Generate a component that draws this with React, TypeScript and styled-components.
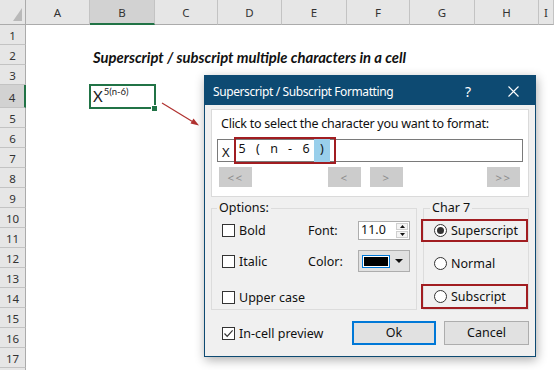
import React from 'react';
import styled, { createGlobalStyle, css } from 'styled-components';

const GlobalStyle = createGlobalStyle`
  html, body { margin: 0; padding: 0; background: #fff; }
  body { width: 554px; height: 370px; overflow: hidden; }
  * { box-sizing: border-box; }
`;

const UI_FONT = `"Noto Sans", "Open Sans", sans-serif`;
const CELL_FONT = `Lato, "Liberation Sans", sans-serif`;
const GREEN = '#217346';
const RED = '#a11d21';
const TITLE_BLUE = '#0d4a72';

const Stage = styled.div`
  position: relative;
  width: 554px;
  height: 370px;
  overflow: hidden;
  background: #fff;
`;

/* ---------------- Spreadsheet ---------------- */

const Sheet = styled.div`
  display: grid;
  grid-template-columns: 26px 64px 65px 63px 64px 65px 63px 65px 64px 1fr;
  grid-template-rows: 25px 20px 20px 20px 23px repeat(14, 20px);
  width: 554px;
  height: 370px;
  font-family: ${UI_FONT};
`;

const Corner = styled.div`
  grid-column: 1;
  grid-row: 1;
  background: #e6e6e6;
  border-right: 1px solid #ababab;
  border-bottom: 1px solid #ababab;
  display: flex;
  align-items: flex-end;
  justify-content: flex-end;
  padding: 0 3px 3px 0;
`;

const ColHeader = styled.div<{ $col: number; $selected?: boolean }>`
  grid-column: ${(p) => p.$col};
  grid-row: 1;
  background: ${(p) => (p.$selected ? '#d2d2d2' : '#e6e6e6')};
  border-right: 1px solid #c3c3c3;
  border-bottom: ${(p) => (p.$selected ? `2px solid ${GREEN}` : '1px solid #ababab')};
  display: flex;
  align-items: center;
  justify-content: center;
  font-size: 11.5px;
  color: #333;
  padding-top: ${(p) => (p.$selected ? '1px' : '0')};
`;

const RowHeader = styled.div<{ $row: number; $selected?: boolean }>`
  grid-column: 1;
  grid-row: ${(p) => p.$row};
  background: ${(p) => (p.$selected ? '#d2d2d2' : '#e6e6e6')};
  border-right: ${(p) => (p.$selected ? `2px solid ${GREEN}` : '1px solid #ababab')};
  border-bottom: 1px solid #c3c3c3;
  display: flex;
  align-items: center;
  justify-content: center;
  font-size: 11.5px;
  color: #333;
  padding-top: ${(p) => (p.$selected ? '3px' : '1px')};
`;

const Cell = styled.div<{ $col: number; $row: number; $active?: boolean }>`
  grid-column: ${(p) => p.$col};
  grid-row: ${(p) => p.$row};
  position: relative;
  display: flex;
  align-items: flex-end;
  padding: 0 0 0 3px;
  white-space: nowrap;
  font-family: ${CELL_FONT};
  color: #111;
  ${(p) =>
    p.$active &&
    css`
      outline: 2px solid ${GREEN};
      outline-offset: -1px;
      z-index: 1;
      padding-bottom: 2px;
    `}
`;

const SheetTitle = styled.span`
  font-size: 14.8px;
  font-weight: 700;
  font-style: italic;
  line-height: 16px;
`;

const CellText = styled.span`
  font-size: 15px;
  line-height: 17px;
  color: #222;
  padding-bottom: 1px;
`;

const Sup = styled.sup`
  font-size: 9.5px;
  vertical-align: 7px;
  line-height: 0;
  margin-left: 1px;
`;

const FillHandle = styled.span`
  position: absolute;
  right: -2px;
  bottom: -3px;
  width: 6px;
  height: 6px;
  background: ${GREEN};
  border: 1px solid #fff;
  border-right: none;
  border-bottom: none;
`;

const ArrowLayer = styled.svg`
  position: absolute;
  left: 158px;
  top: 98px;
  overflow: visible;
`;

/* ---------------- Dialog ---------------- */

const Dialog = styled.div`
  position: absolute;
  left: 204px;
  top: 75px;
  width: 332px;
  height: 282px;
  border: 1px solid ${TITLE_BLUE};
  background: #f0f0f0;
  box-shadow: 1px 3px 10px rgba(0, 0, 0, 0.32);
  display: flex;
  flex-direction: column;
  font-family: ${UI_FONT};
  font-size: 12px;
  color: #111;
`;

const TitleBar = styled.div`
  height: 29px;
  background: ${TITLE_BLUE};
  color: #fff;
  display: flex;
  align-items: center;
  padding: 1px 0 0 8px;
  font-size: 12px;
`;

const TitleText = styled.span`
  flex: 1;
  letter-spacing: -0.4px;
`;

const TitleHelp = styled.span`
  width: 20px;
  text-align: center;
  font-size: 14px;
  margin-right: 25px;
`;

const TitleClose = styled.span`
  width: 20px;
  display: flex;
  justify-content: center;
  margin-right: 12px;
`;

const DialogBody = styled.div`
  flex: 1;
  display: flex;
  flex-direction: column;
  padding: 4px 6px 0 6px;
`;

const SelectPanel = styled.div`
  height: 88px;
  background: #fff;
  border: 1px solid #dadada;
  display: flex;
  flex-direction: column;
  padding: 5px 5px 0 5px;
`;

const PanelLabel = styled.div`
  line-height: 17px;
  padding-left: 4px;
  letter-spacing: -0.25px;
  font-size: 12.5px;
`;

const CharBox = styled.div`
  margin-top: 7px;
  height: 23px;
  border: 1px solid #7a7a7a;
  background: #fff;
  display: flex;
  align-items: stretch;
  padding-left: 4px;
`;

const CharPrefix = styled.span`
  display: flex;
  align-items: center;
  font-size: 13px;
  width: 12px;
  padding-top: 2px;
`;

const CharStrip = styled.span`
  display: flex;
  margin: -3px 0;
  border: 2px solid ${RED};
  width: 102px;
  padding-right: 4px;
`;

const CharCell = styled.span<{ $selected?: boolean }>`
  width: 16px;
  flex: none;
  display: flex;
  align-items: center;
  justify-content: center;
  font-size: 12.5px;
  padding-bottom: 4px;
  background: ${(p) => (p.$selected ? '#99cfeb' : 'transparent')};
  &:first-child {
    margin-left: -2px;
  }
`;

const NavRow = styled.div`
  display: flex;
  margin-top: 5px;
  padding: 0 3px 0 2px;
`;

const NavButton = styled.button<{ $gap?: number }>`
  width: 33px;
  height: 20px;
  border: none;
  background: #cccccc;
  color: #8a8a8a;
  font-family: ${UI_FONT};
  font-size: 11.5px;
  letter-spacing: 1.5px;
  padding: 0;
  margin-left: ${(p) => (p.$gap ?? 0)}px;
  &:last-child {
    margin-left: auto;
  }
`;

const LowerGrid = styled.div`
  display: grid;
  grid-template-columns: 206px 106px;
  column-gap: 6px;
  margin-top: 3px;
`;

const GroupBox = styled.fieldset`
  margin: 0;
  padding: 0;
  border: 1px solid #dcdcdc;
  height: 110px;
  min-width: 0;
`;

const GroupLegend = styled.legend<{ $offset: number }>`
  padding: 0 2px;
  margin-left: ${(p) => p.$offset}px;
  line-height: 16px;
  font-size: 12.5px;
`;

const OptionsGrid = styled.div`
  display: grid;
  grid-template-columns: 86px 50px 52px;
  grid-template-rows: 20px 22px 25px;
  row-gap: 10px;
  margin: 4px 0 0 10px;
  align-items: center;
`;

const CheckRow = styled.label<{ $end?: boolean }>`
  display: flex;
  align-items: center;
  gap: 4px;
  font-size: 12.5px;
  white-space: nowrap;
  align-self: ${(p) => (p.$end ? 'end' : 'center')};
  height: 20px;
`;

const CheckBoxMark = styled.span`
  width: 13px;
  height: 13px;
  flex: none;
  border: 1px solid #333;
  background: #fff;
  display: flex;
  align-items: center;
  justify-content: center;
`;

const FieldLabel = styled.span`
  font-size: 12.5px;
`;

const SpinBox = styled.div`
  width: 52px;
  height: 19px;
  border: 1px solid #adadad;
  background: #fff;
  display: flex;
  align-items: stretch;
`;

const SpinValue = styled.span`
  flex: 1;
  padding-left: 2px;
  font-size: 12.5px;
  line-height: 16px;
`;

const SpinButtons = styled.span`
  width: 13px;
  display: flex;
  flex-direction: column;
  gap: 1px;
  padding: 1px 1px 1px 0;
`;

const SpinButton = styled.span`
  flex: 1;
  border: 1px solid #cfcfcf;
  background: #f4f4f4;
  display: flex;
  align-items: center;
  justify-content: center;
`;

const ColorSelect = styled.div`
  width: 52px;
  height: 22px;
  border: 1px solid #adadad;
  background: #e1e1e1;
  display: flex;
  align-items: center;
  padding-left: 3px;
`;

const Swatch = styled.span`
  width: 28px;
  height: 13px;
  border: 1px solid #0078d7;
  background: #000;
  box-shadow: inset 0 0 0 1px #fff;
`;

const DropArrow = styled.span`
  margin-left: 5px;
  display: flex;
`;

const RadioList = styled.div`
  display: flex;
  flex-direction: column;
  gap: 10px;
  margin: 3px 0 0 -3px;
`;

const RadioRow = styled.label<{ $highlight?: boolean; $h: number }>`
  height: ${(p) => p.$h}px;
  display: flex;
  align-items: center;
  gap: 4px;
  padding-left: 11px;
  border: 2px solid ${(p) => (p.$highlight ? RED : 'transparent')};
  font-size: 12.5px;
`;

const RadioMark = styled.span<{ $on?: boolean }>`
  width: 13px;
  height: 13px;
  flex: none;
  border-radius: 50%;
  border: 1px solid #333;
  background: #fff;
  display: flex;
  align-items: center;
  justify-content: center;
  &::after {
    content: '';
    width: 7px;
    height: 7px;
    border-radius: 50%;
    background: ${(p) => (p.$on ? '#333' : 'transparent')};
  }
`;

const BottomRow = styled.div`
  display: flex;
  align-items: center;
  margin-top: 11px;
  padding-left: 11px;
  height: 24px;
`;

const DialogButton = styled.button<{ $primary?: boolean }>`
  height: 24px;
  width: ${(p) => (p.$primary ? 84 : 85)}px;
  border: ${(p) => (p.$primary ? '2px solid #0078d7' : '1px solid #adadad')};
  background: #e1e1e1;
  font-family: ${UI_FONT};
  font-size: 12.5px;
  color: #111;
  padding: 0 0 2px 0;
  margin-left: ${(p) => (p.$primary ? 'auto' : '8px')};
`;

/* ---------------- Data ---------------- */

const columns = [
  { label: 'A' },
  { label: 'B', selected: true },
  { label: 'C' },
  { label: 'D' },
  { label: 'E' },
  { label: 'F' },
  { label: 'G' },
  { label: 'H' },
  { label: 'I' },
];

const rows = Array.from({ length: 17 }, (_, i) => i + 1);
const chars = ['5', '(', 'n', '-', '6', ')'];

const CheckGlyph = () => (
  <svg width="11" height="11" viewBox="0 0 11 11">
    <path d="M1.5 5.5 L4.2 8.3 L9.6 2.4" fill="none" stroke="#333" strokeWidth="1.2" />
  </svg>
);

const Tri = ({ up, w = 5, h = 3 }: { up?: boolean; w?: number; h?: number }) => (
  <svg width={w} height={h} viewBox={`0 0 ${w} ${h}`}>
    <polygon points={up ? `0,${h} ${w / 2},0 ${w},${h}` : `0,0 ${w},0 ${w / 2},${h}`} fill="#111" />
  </svg>
);

export default function App() {
  return (
    <>
      <GlobalStyle />
      <Stage>
        <Sheet>
          <Corner>
            <svg width="9" height="13" viewBox="0 0 9 13">
              <polygon points="9,0 9,13 0,13" fill="#b9b9b9" />
            </svg>
          </Corner>
          {columns.map((c, i) => (
            <ColHeader key={c.label} $col={i + 2} $selected={c.selected}>
              {c.label}
            </ColHeader>
          ))}
          {rows.map((r) => (
            <RowHeader key={r} $row={r + 1} $selected={r === 4}>
              {r}
            </RowHeader>
          ))}
          <RowHeader $row={19} aria-hidden />
          <Cell $col={3} $row={3}>
            <SheetTitle>Superscript / subscript multiple characters in a cell</SheetTitle>
          </Cell>
          <Cell $col={3} $row={5} $active>
            <CellText>
              X<Sup>5(n-6)</Sup>
            </CellText>
            <FillHandle />
          </Cell>
        </Sheet>

        <ArrowLayer width="44" height="30" viewBox="0 0 44 30">
          <line x1="4" y1="5" x2="36" y2="24.5" stroke="#b0312f" strokeWidth="1.2" />
          <polygon points="41,27.5 32.5,25.5 35.5,20.5" fill="#b0312f" />
        </ArrowLayer>

        <Dialog>
          <TitleBar>
            <TitleText>Superscript / Subscript Formatting</TitleText>
            <TitleHelp>?</TitleHelp>
            <TitleClose>
              <svg width="11" height="11" viewBox="0 0 11 11">
                <path d="M0.5 0.5 L10.5 10.5 M10.5 0.5 L0.5 10.5" stroke="#fff" strokeWidth="1.1" />
              </svg>
            </TitleClose>
          </TitleBar>
          <DialogBody>
            <SelectPanel>
              <PanelLabel>Click to select the character you want to format:</PanelLabel>
              <CharBox>
                <CharPrefix>X</CharPrefix>
                <CharStrip>
                  {chars.map((ch, i) => (
                    <CharCell key={i} $selected={i === chars.length - 1}>
                      {ch}
                    </CharCell>
                  ))}
                </CharStrip>
              </CharBox>
              <NavRow>
                <NavButton>&lt;&lt;</NavButton>
                <NavButton $gap={76}>&lt;</NavButton>
                <NavButton $gap={9}>&gt;</NavButton>
                <NavButton>&gt;&gt;</NavButton>
              </NavRow>
            </SelectPanel>

            <LowerGrid>
              <GroupBox>
                <GroupLegend $offset={5}>Options:</GroupLegend>
                <OptionsGrid>
                  <CheckRow>
                    <CheckBoxMark />
                    Bold
                  </CheckRow>
                  <FieldLabel>Font:</FieldLabel>
                  <SpinBox>
                    <SpinValue>11.0</SpinValue>
                    <SpinButtons>
                      <SpinButton>
                        <Tri up />
                      </SpinButton>
                      <SpinButton>
                        <Tri />
                      </SpinButton>
                    </SpinButtons>
                  </SpinBox>
                  <CheckRow>
                    <CheckBoxMark />
                    Italic
                  </CheckRow>
                  <FieldLabel>Color:</FieldLabel>
                  <ColorSelect>
                    <Swatch />
                    <DropArrow>
                      <Tri w={8} h={4} />
                    </DropArrow>
                  </ColorSelect>
                  <CheckRow $end>
                    <CheckBoxMark />
                    Upper case
                  </CheckRow>
                </OptionsGrid>
              </GroupBox>
              <GroupBox>
                <GroupLegend $offset={6}>Char 7</GroupLegend>
                <RadioList>
                  <RadioRow $highlight $h={23}>
                    <RadioMark $on />
                    Superscript
                  </RadioRow>
                  <RadioRow $h={22}>
                    <RadioMark />
                    Normal
                  </RadioRow>
                  <RadioRow $highlight $h={25}>
                    <RadioMark />
                    Subscript
                  </RadioRow>
                </RadioList>
              </GroupBox>
            </LowerGrid>

            <BottomRow>
              <CheckRow>
                <CheckBoxMark>
                  <CheckGlyph />
                </CheckBoxMark>
                In-cell preview
              </CheckRow>
              <DialogButton $primary>Ok</DialogButton>
              <DialogButton>Cancel</DialogButton>
            </BottomRow>
          </DialogBody>
        </Dialog>
      </Stage>
    </>
  );
}
